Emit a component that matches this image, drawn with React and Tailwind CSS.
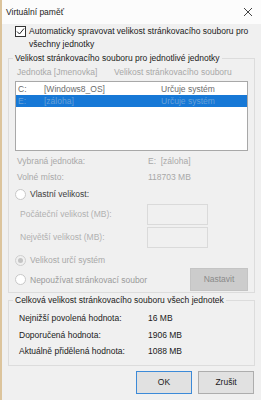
import React from 'react';

const Radio = ({ checked, disabled }) => (
  <span
    className={`inline-flex items-center justify-center w-[11px] h-[11px] rounded-full border mr-[4px] shrink-0 ${
      disabled ? 'border-[#cfcfcf] bg-[#f0f0f0]' : 'border-[#c8c8c8] bg-white'
    }`}
  >
    {checked && <span className="w-[5px] h-[5px] rounded-full bg-[#c4c4c4]" />}
  </span>
);

const Group = ({ title, className, children }) => (
  <div className={`relative border border-[#dcdcdc] ${className}`}>
    <span className="absolute -top-[8px] left-[4px] px-[2px] bg-[#f0f0f0] text-[#1a1a1a] leading-[14px] whitespace-nowrap">
      {title}
    </span>
    {children}
  </div>
);

export default function App() {
  return (
    <div
      className="w-[261px] h-[400px] bg-[#f0f0f0] border-l-2 border-[#dcc49c] flex flex-col text-[8.5px] text-[#1a1a1a] whitespace-nowrap"
      style={{ fontFamily: '"Liberation Sans", Arial, sans-serif' }}
    >
      {/* title bar */}
      <div className="h-[24px] bg-[#fcfcfc] flex items-center justify-between pl-[4px] pr-[8px] shrink-0">
        <span className="text-[#222]">Virtuální paměť</span>
        <svg width="10" height="10" viewBox="0 0 10 10">
          <path d="M1 1 L9 9 M9 1 L1 9" stroke="#444" strokeWidth="1" />
        </svg>
      </div>

      <div className="flex flex-col px-[6px] pt-[1px]">
        {/* auto checkbox */}
        <div className="flex items-start pl-[7px]">
          <span className="w-[11px] h-[11px] mt-[1px] mr-[3px] border border-[#333] bg-white flex items-center justify-center shrink-0">
            <svg width="9" height="9" viewBox="0 0 9 9">
              <path d="M1 4.5 L3.5 7 L8 1.5" fill="none" stroke="#222" strokeWidth="1" />
            </svg>
          </span>
          <span className="leading-[13px] whitespace-normal">
            Automaticky spravovat velikost stránkovacího souboru pro všechny jednotky
          </span>
        </div>

        {/* per-drive group */}
        <Group title="Velikost stránkovacího souboru pro jednotlivé jednotky" className="mt-[7px] h-[235px] px-[6px] pt-[6px]">
          <div className="flex text-[#a8a8a8] leading-[14px] pl-[2px]">
            <span className="w-[97px]">Jednotka [Jmenovka]</span>
            <span>Velikost stránkovacího souboru</span>
          </div>
          <div className="mt-[2px] h-[70px] bg-white border border-[#a8a8a8] pt-[1px]">
            <div className="flex h-[12px] items-center px-[2px] text-[#6b6b6b]">
              <span className="w-[26px]">C:</span>
              <span className="w-[117px]">[Windows8_OS]</span>
              <span>Určuje systém</span>
            </div>
            <div className="flex h-[12px] items-center px-[2px] bg-[#1778d6] text-[#6aa2d6]">
              <span className="w-[26px]">E:</span>
              <span className="w-[117px]">[záloha]</span>
              <span>Určuje systém</span>
            </div>
          </div>

          <div className="mt-[2px] text-[#a8a8a8] leading-[16px] pl-[2px]">
            <div className="flex">
              <span className="w-[131px]">Vybraná jednotka:</span>
              <span>E:&nbsp; [záloha]</span>
            </div>
            <div className="flex">
              <span className="w-[131px]">Volné místo:</span>
              <span>118703 MB</span>
            </div>
          </div>

          <div className="flex items-center leading-[16px] mt-[1px]">
            <Radio />
            <span className="text-[#3c3c3c]">Vlastní velikost:</span>
          </div>

          <div className="pl-[5px] text-[#b0b0b0] mt-[2px] flex flex-col gap-[2px]">
            <div className="flex items-center h-[21px]">
              <span className="w-[127px]">Počáteční velikost (MB):</span>
              <span className="w-[61px] h-[21px] border border-[#dadada] bg-[#f0f0f0]" />
            </div>
            <div className="flex items-center h-[21px]">
              <span className="w-[127px]">Největší velikost (MB):</span>
              <span className="w-[61px] h-[21px] border border-[#dadada] bg-[#f0f0f0]" />
            </div>
          </div>

          <div className="flex items-center leading-[16px] text-[#a8a8a8] mt-[4px]">
            <Radio checked disabled />
            <span>Velikost určí systém</span>
          </div>
          <div className="flex items-center justify-between">
            <div className="flex items-center leading-[16px]">
              <Radio />
              <span className="text-[#9a9a9a]">Nepoužívat stránkovací soubor</span>
            </div>
            <div className="w-[58px] h-[23px] bg-[#cccccc] border border-[#c4c4c4] text-[#8a8a8a] flex items-center justify-center">
              Nastavit
            </div>
          </div>
        </Group>

        {/* totals group */}
        <Group title="Celková velikost stránkovacího souboru všech jednotek" className="mt-[7px] h-[66px] pl-[10px] pt-[9px]">
          <div className="leading-[16.5px] text-[#1a1a1a]">
            <div className="flex">
              <span className="w-[129px]">Nejnižší povolená hodnota:</span>
              <span>16 MB</span>
            </div>
            <div className="flex">
              <span className="w-[129px]">Doporučená hodnota:</span>
              <span>1906 MB</span>
            </div>
            <div className="flex">
              <span className="w-[129px]">Aktuálně přidělená hodnota:</span>
              <span>1088 MB</span>
            </div>
          </div>
        </Group>

        {/* buttons */}
        <div className="flex justify-end gap-[6px] mt-[5px] pr-[1px]">
          <div className="w-[56px] h-[23px] bg-[#e1e1e1] border border-[#3c8ad8] flex items-center justify-center">
            OK
          </div>
          <div className="w-[56px] h-[23px] bg-[#e1e1e1] border border-[#adadad] flex items-center justify-center">
            Zrušit
          </div>
        </div>
      </div>
    </div>
  );
}
